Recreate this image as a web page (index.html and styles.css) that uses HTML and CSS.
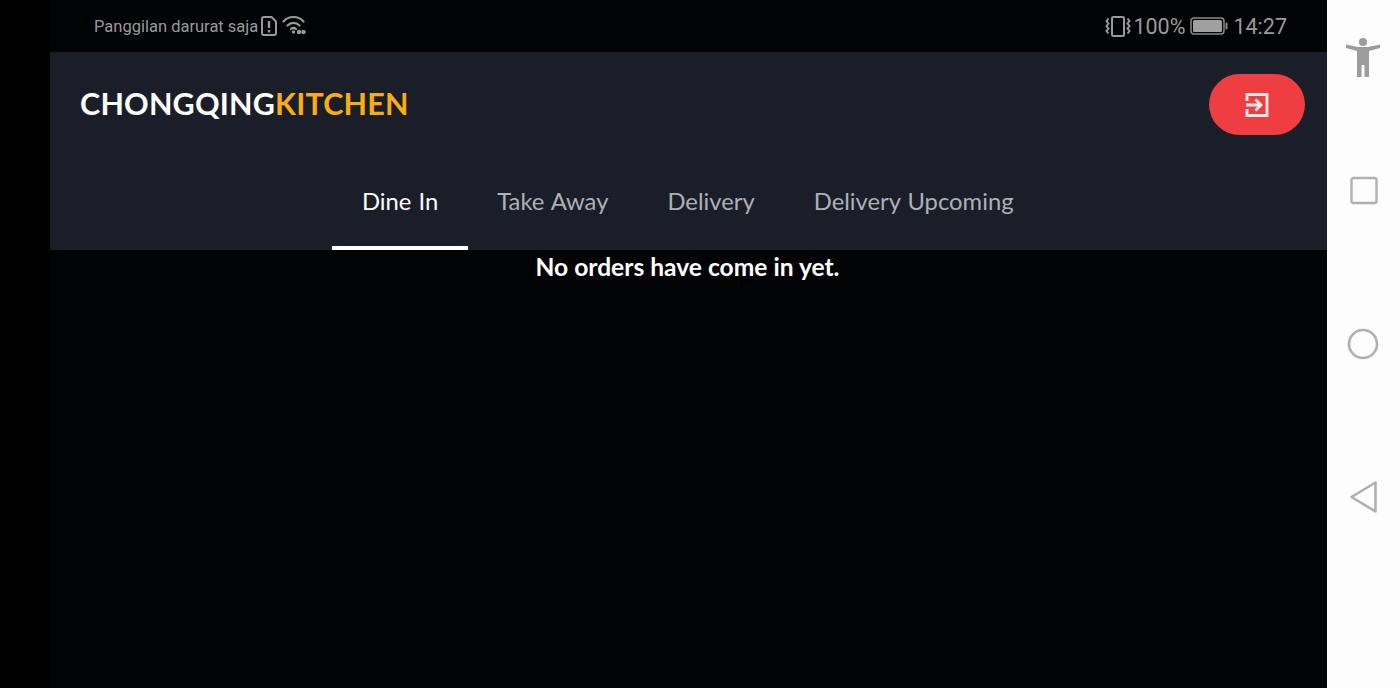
FILE: index.html
```html
<!DOCTYPE html>
<html lang="en">
<head>
<meta charset="utf-8">
<title>Chongqing Kitchen</title>
<link rel="stylesheet" href="styles.css">
</head>
<body>
<div class="screen">
  <div class="cutout"></div>
  <main class="app">
    <div class="statusbar">
      <div class="status-left">
        <span>Panggilan darurat saja</span>
        <svg class="sim" width="16" height="20" viewBox="0 0 16 20" fill="none" stroke="#9a9a9a" stroke-width="2"><path d="M3 1h7.500L15 5.500V17a2 2 0 0 1-2 2H3a2 2 0 0 1-2-2V3a2 2 0 0 1 2-2z"/><path d="M8 5v7M8 14v2.500" stroke-width="2.400"/></svg>
        <svg class="wifi" width="24" height="20" viewBox="0 0 24 20" fill="none" stroke="#9a9a9a" stroke-width="2.200" stroke-linecap="round"><path d="M1.500 6.500C6.500 .5 16.500 .5 21.500 6.500"/><path d="M5.500 10.500C9 7 14 7 17.500 10.500"/><path d="M9 14c1.500-1.200 3.500-1.200 5 0"/><circle cx="11.500" cy="17" r="1.700" fill="#9a9a9a" stroke="none"/><circle cx="17" cy="17" r="2.200" fill="#9a9a9a" stroke="none"/><circle cx="21.500" cy="17" r="2.200" fill="#9a9a9a" stroke="none"/></svg>
      </div>
      <div class="status-right">
        <svg class="vibrate" width="26" height="21" viewBox="0 0 26 21" fill="none" stroke="#9a9a9a" stroke-width="2"><rect x="7" y="1" width="12" height="19" rx="1.500"/><path d="M3.500 2.500l-2 2.500 2 2.500-2 2.500 2 2.500-2 2.500 2 2.500M22.500 2.500l2 2.500-2 2.500 2 2.500-2 2.500 2 2.500-2 2.500"/></svg>
        <span class="battery-text">100%</span>
        <svg class="battery" width="38" height="20" viewBox="0 0 38 20"><rect x="1" y="2" width="33" height="16" rx="3" fill="none" stroke="#8a8a8a" stroke-width="1.500"/><rect x="3" y="4" width="29" height="12" rx="1.500" fill="#a0a0a0"/><rect x="35.500" y="6.500" width="2" height="7" rx="1" fill="#8a8a8a"/></svg>
        <span class="clock">14:27</span>
      </div>
    </div>
    <header class="header">
      <div class="topbar">
        <div class="logo">CHONGQING<span class="logo-accent">KITCHEN</span></div>
        <button class="logout" type="button" aria-label="Log out">
          <svg width="24" height="26" viewBox="0 0 24 26" fill="none" stroke="#f9e9e9" stroke-width="2.800"><path d="M2 9V2.500h20v21H2V17"/><path d="M1 13h15M10.500 7.500l5.500 5.500-5.500 5.500"/></svg>
        </button>
      </div>
      <nav class="tabs">
        <a class="tab tab-active">Dine In</a>
        <a class="tab">Take Away</a>
        <a class="tab">Delivery</a>
        <a class="tab">Delivery Upcoming</a>
      </nav>
    </header>
    <p class="empty">No orders have come in yet.</p>
  </main>
  <aside class="navbar">
    <div class="nav-item">
      <svg width="36" height="40" viewBox="0 0 36 40" fill="#9c9c9c"><circle cx="18" cy="5" r="4"/><path d="M1 7.500C8.500 9 12 10 13 10h10c1 0 4.500-1 12-2.500V11l-11 3v26h-4.500V28h-3v12H12V14L1 11z"/></svg>
    </div>
    <div class="nav-item">
      <svg width="29" height="29" viewBox="0 0 29 29" fill="none" stroke="#b0b0b0" stroke-width="2.400"><rect x="2.500" y="2" width="25" height="25" rx="2"/></svg>
    </div>
    <div class="nav-item">
      <svg width="32" height="32" viewBox="0 0 32 32" fill="none" stroke="#b0b0b0" stroke-width="2.600"><circle cx="16" cy="16" r="14"/></svg>
    </div>
    <div class="nav-item">
      <svg width="30" height="34" viewBox="0 0 30 34" fill="none" stroke="#b0b0b0" stroke-width="2.600" stroke-linejoin="round"><path d="M27.500 2.500v29L3.500 17z"/></svg>
    </div>
  </aside>
</div>
</body>
</html>
```

FILE: styles.css
```css
* { box-sizing: border-box; }
html, body { margin: 0; height: 100%; overflow: hidden; background: #000; }
.screen {
  display: grid;
  grid-template-columns: 50px 1277px 73px;
  width: 1400px;
  height: 688px;
}
.cutout { background: #000; }
.app { background: #020305; display: flex; flex-direction: column; min-width: 0; }
.statusbar {
  height: 52px;
  display: flex;
  justify-content: space-between;
  align-items: center;
  padding: 0 40px 0 44px;
  color: #9a9a9a;
  font-family: Roboto, "Liberation Sans", sans-serif;
}
.status-left { display: flex; align-items: center; font-size: 16.500px; }
.status-left .sim { margin-left: 3px; }
.status-left .wifi { margin-left: 5px; margin-top: -3px; }
.status-right { display: flex; align-items: center; font-size: 21.500px; }
.battery-text { margin-left: 2px; }
.battery { margin-left: 5px; }
.clock { margin-left: 5px; }
.header { background: #1a1e28; height: 198px; display: flex; flex-direction: column; }
.topbar {
  height: 104px;
  display: flex;
  justify-content: space-between;
  align-items: center;
  padding: 0 22px 0 30px;
}
.logo {
  color: #fff;
  font-family: Lato, "Liberation Sans", sans-serif;
  font-weight: 700;
  font-size: 30.500px;
  line-height: 36px;
  letter-spacing: 0.200px;
  margin-bottom: 2px;
}
.logo-accent { color: #f9ad13; }
.logout {
  width: 96px;
  height: 61px;
  margin-top: 1px;
  border: none;
  border-radius: 31px;
  background: #ef3e42;
  display: flex;
  align-items: center;
  justify-content: center;
  padding: 0;
}
.tabs { display: flex; justify-content: center; height: 94px; padding-right: 1.500px; }
.tab {
  display: flex;
  align-items: center;
  padding: 0 29.500px 1px;
  font-family: Lato, "Liberation Sans", sans-serif;
  font-size: 23.800px;
  word-spacing: 1px;
  color: #aeb0b6;
  border-bottom: 4px solid transparent;
  height: 94px;
  white-space: nowrap;
}
.tab-active { color: #fff; border-bottom-color: #fff; }
.empty {
  margin: 0;
  padding-right: 2px;
  padding-top: 1px;
  text-align: center;
  color: #fff;
  font-family: Lato, "Liberation Sans", sans-serif;
  font-weight: 700;
  font-size: 24.600px;
  line-height: 32px;
}
.navbar {
  background: #fdfdfd;
  display: grid;
  grid-template-rows: 114px 153px 153px 153px;
  justify-items: center;
  align-items: center;
  padding-right: 1px;
}
.nav-item { display: flex; align-items: center; justify-content: center; }
```
